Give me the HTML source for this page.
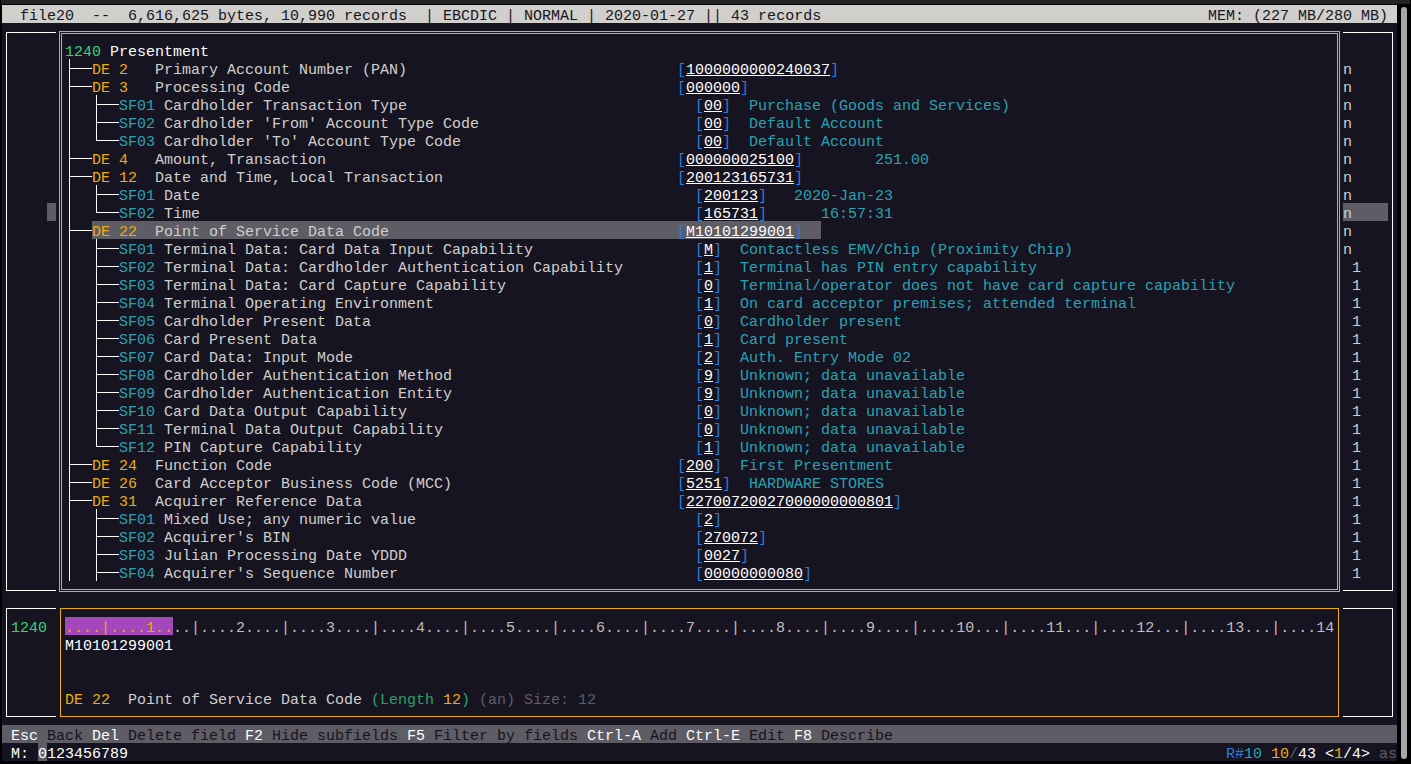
<!DOCTYPE html>
<html><head><meta charset="utf-8"><style>
html,body{margin:0;padding:0;}
body{width:1411px;height:764px;overflow:hidden;position:relative;background:#000;}
#t{position:absolute;left:0;top:0;width:1411px;height:764px;}
#t div{position:absolute;}
#t p{position:absolute;margin:0;white-space:pre;font-family:"Liberation Mono",monospace;font-size:15px;line-height:18px;height:18px;}
#t p.u{text-decoration:underline;text-underline-offset:1px;text-decoration-thickness:1px;}
</style></head><body><div id="t">
<div style="left:1px;top:0;width:1409px;height:4px;background:#232323"></div>
<div style="left:2px;top:5px;width:1395px;height:756px;background:#171421"></div>
<div style="left:1401px;top:7px;width:6px;height:752px;background:#a8a8a8;border-radius:3px"></div>
<div style="left:2px;top:5px;width:1395px;height:18px;background:#d0cfcc;"></div>
<p style="left:2px;top:8px;color:#171421">  file20  --  6,616,625 bytes, 10,990 records  | EBCDIC | NORMAL | 2020-01-27 || 43 records</p>
<p style="left:1208px;top:8px;color:#171421">MEM: (227 MB/280 MB)</p>
<div style="left:6px;top:32px;width:50px;height:1px;background:#ffffff;"></div>
<div style="left:6px;top:590px;width:50px;height:1px;background:#ffffff;"></div>
<div style="left:6px;top:32px;width:1px;height:559px;background:#ffffff;"></div>
<div style="left:1343px;top:32px;width:50px;height:1px;background:#ffffff;"></div>
<div style="left:1343px;top:590px;width:50px;height:1px;background:#ffffff;"></div>
<div style="left:1392px;top:32px;width:1px;height:559px;background:#ffffff;"></div>
<div style="left:59px;top:31px;width:1281px;height:1px;background:#e9ad0c;"></div>
<div style="left:59px;top:591px;width:1281px;height:1px;background:#e9ad0c;"></div>
<div style="left:59px;top:31px;width:1px;height:561px;background:#e9ad0c;"></div>
<div style="left:1339px;top:31px;width:1px;height:561px;background:#e9ad0c;"></div>
<div style="left:61px;top:33px;width:1277px;height:1px;background:#e9ad0c;"></div>
<div style="left:61px;top:589px;width:1277px;height:1px;background:#e9ad0c;"></div>
<div style="left:61px;top:33px;width:1px;height:557px;background:#e9ad0c;"></div>
<div style="left:1337px;top:33px;width:1px;height:557px;background:#e9ad0c;"></div>
<div style="left:47px;top:203px;width:9px;height:18px;background:#5e5c64;"></div>
<div style="left:92px;top:221px;width:729px;height:18px;background:#5e5c64;"></div>
<div style="left:1343px;top:203px;width:45px;height:18px;background:#5e5c64;"></div>
<p style="left:65px;top:44px;color:#33d17a">1240</p>
<p style="left:110px;top:44px;color:#ffffff">Presentment</p>
<div style="left:69px;top:59px;width:1px;height:18px;background:#ffffff;"></div>
<div style="left:69px;top:68px;width:23px;height:1px;background:#ffffff;"></div>
<p style="left:92px;top:62px;color:#e9ad0c">DE 2</p>
<p style="left:155px;top:62px;color:#d0cfcc">Primary Account Number (PAN)</p>
<p style="left:677px;top:62px;color:#2a7bde">[</p>
<p class="u" style="left:686px;top:62px;color:#ffffff">1000000000240037</p>
<p style="left:830px;top:62px;color:#2a7bde">]</p>
<div style="left:69px;top:77px;width:1px;height:18px;background:#ffffff;"></div>
<div style="left:69px;top:86px;width:23px;height:1px;background:#ffffff;"></div>
<p style="left:92px;top:80px;color:#e9ad0c">DE 3</p>
<p style="left:155px;top:80px;color:#d0cfcc">Processing Code</p>
<p style="left:677px;top:80px;color:#2a7bde">[</p>
<p class="u" style="left:686px;top:80px;color:#ffffff">000000</p>
<p style="left:740px;top:80px;color:#2a7bde">]</p>
<div style="left:69px;top:95px;width:1px;height:18px;background:#ffffff;"></div>
<div style="left:96px;top:95px;width:1px;height:18px;background:#ffffff;"></div>
<div style="left:96px;top:104px;width:23px;height:1px;background:#ffffff;"></div>
<p style="left:119px;top:98px;color:#2aa1b3">SF01</p>
<p style="left:164px;top:98px;color:#d0cfcc">Cardholder Transaction Type</p>
<p style="left:695px;top:98px;color:#2a7bde">[</p>
<p class="u" style="left:704px;top:98px;color:#ffffff">00</p>
<p style="left:722px;top:98px;color:#2a7bde">]</p>
<p style="left:749px;top:98px;color:#2aa1b3">Purchase (Goods and Services)</p>
<div style="left:69px;top:113px;width:1px;height:18px;background:#ffffff;"></div>
<div style="left:96px;top:113px;width:1px;height:18px;background:#ffffff;"></div>
<div style="left:96px;top:122px;width:23px;height:1px;background:#ffffff;"></div>
<p style="left:119px;top:116px;color:#2aa1b3">SF02</p>
<p style="left:164px;top:116px;color:#d0cfcc">Cardholder &#x27;From&#x27; Account Type Code</p>
<p style="left:695px;top:116px;color:#2a7bde">[</p>
<p class="u" style="left:704px;top:116px;color:#ffffff">00</p>
<p style="left:722px;top:116px;color:#2a7bde">]</p>
<p style="left:749px;top:116px;color:#2aa1b3">Default Account</p>
<div style="left:69px;top:131px;width:1px;height:18px;background:#ffffff;"></div>
<div style="left:96px;top:131px;width:1px;height:10px;background:#ffffff;"></div>
<div style="left:96px;top:140px;width:23px;height:1px;background:#ffffff;"></div>
<p style="left:119px;top:134px;color:#2aa1b3">SF03</p>
<p style="left:164px;top:134px;color:#d0cfcc">Cardholder &#x27;To&#x27; Account Type Code</p>
<p style="left:695px;top:134px;color:#2a7bde">[</p>
<p class="u" style="left:704px;top:134px;color:#ffffff">00</p>
<p style="left:722px;top:134px;color:#2a7bde">]</p>
<p style="left:749px;top:134px;color:#2aa1b3">Default Account</p>
<div style="left:69px;top:149px;width:1px;height:18px;background:#ffffff;"></div>
<div style="left:69px;top:158px;width:23px;height:1px;background:#ffffff;"></div>
<p style="left:92px;top:152px;color:#e9ad0c">DE 4</p>
<p style="left:155px;top:152px;color:#d0cfcc">Amount, Transaction</p>
<p style="left:677px;top:152px;color:#2a7bde">[</p>
<p class="u" style="left:686px;top:152px;color:#ffffff">000000025100</p>
<p style="left:794px;top:152px;color:#2a7bde">]</p>
<p style="left:875px;top:152px;color:#2aa1b3">251.00</p>
<div style="left:69px;top:167px;width:1px;height:18px;background:#ffffff;"></div>
<div style="left:69px;top:176px;width:23px;height:1px;background:#ffffff;"></div>
<p style="left:92px;top:170px;color:#e9ad0c">DE 12</p>
<p style="left:155px;top:170px;color:#d0cfcc">Date and Time, Local Transaction</p>
<p style="left:677px;top:170px;color:#2a7bde">[</p>
<p class="u" style="left:686px;top:170px;color:#ffffff">200123165731</p>
<p style="left:794px;top:170px;color:#2a7bde">]</p>
<div style="left:69px;top:185px;width:1px;height:18px;background:#ffffff;"></div>
<div style="left:96px;top:185px;width:1px;height:18px;background:#ffffff;"></div>
<div style="left:96px;top:194px;width:23px;height:1px;background:#ffffff;"></div>
<p style="left:119px;top:188px;color:#2aa1b3">SF01</p>
<p style="left:164px;top:188px;color:#d0cfcc">Date</p>
<p style="left:695px;top:188px;color:#2a7bde">[</p>
<p class="u" style="left:704px;top:188px;color:#ffffff">200123</p>
<p style="left:758px;top:188px;color:#2a7bde">]</p>
<p style="left:794px;top:188px;color:#2aa1b3">2020-Jan-23</p>
<div style="left:69px;top:203px;width:1px;height:18px;background:#ffffff;"></div>
<div style="left:96px;top:203px;width:1px;height:10px;background:#ffffff;"></div>
<div style="left:96px;top:212px;width:23px;height:1px;background:#ffffff;"></div>
<p style="left:119px;top:206px;color:#2aa1b3">SF02</p>
<p style="left:164px;top:206px;color:#d0cfcc">Time</p>
<p style="left:695px;top:206px;color:#2a7bde">[</p>
<p class="u" style="left:704px;top:206px;color:#ffffff">165731</p>
<p style="left:758px;top:206px;color:#2a7bde">]</p>
<p style="left:821px;top:206px;color:#2aa1b3">16:57:31</p>
<div style="left:69px;top:221px;width:1px;height:18px;background:#ffffff;"></div>
<div style="left:69px;top:230px;width:23px;height:1px;background:#ffffff;"></div>
<p style="left:92px;top:224px;color:#e9ad0c">DE 22</p>
<p style="left:155px;top:224px;color:#d0cfcc">Point of Service Data Code</p>
<p style="left:677px;top:224px;color:#2a7bde">[</p>
<p class="u" style="left:686px;top:224px;color:#ffffff">M10101299001</p>
<p style="left:794px;top:224px;color:#2a7bde">]</p>
<div style="left:69px;top:239px;width:1px;height:18px;background:#ffffff;"></div>
<div style="left:96px;top:239px;width:1px;height:18px;background:#ffffff;"></div>
<div style="left:96px;top:248px;width:23px;height:1px;background:#ffffff;"></div>
<p style="left:119px;top:242px;color:#2aa1b3">SF01</p>
<p style="left:164px;top:242px;color:#d0cfcc">Terminal Data: Card Data Input Capability</p>
<p style="left:695px;top:242px;color:#2a7bde">[</p>
<p class="u" style="left:704px;top:242px;color:#ffffff">M</p>
<p style="left:713px;top:242px;color:#2a7bde">]</p>
<p style="left:740px;top:242px;color:#2aa1b3">Contactless EMV/Chip (Proximity Chip)</p>
<div style="left:69px;top:257px;width:1px;height:18px;background:#ffffff;"></div>
<div style="left:96px;top:257px;width:1px;height:18px;background:#ffffff;"></div>
<div style="left:96px;top:266px;width:23px;height:1px;background:#ffffff;"></div>
<p style="left:119px;top:260px;color:#2aa1b3">SF02</p>
<p style="left:164px;top:260px;color:#d0cfcc">Terminal Data: Cardholder Authentication Capability</p>
<p style="left:695px;top:260px;color:#2a7bde">[</p>
<p class="u" style="left:704px;top:260px;color:#ffffff">1</p>
<p style="left:713px;top:260px;color:#2a7bde">]</p>
<p style="left:740px;top:260px;color:#2aa1b3">Terminal has PIN entry capability</p>
<div style="left:69px;top:275px;width:1px;height:18px;background:#ffffff;"></div>
<div style="left:96px;top:275px;width:1px;height:18px;background:#ffffff;"></div>
<div style="left:96px;top:284px;width:23px;height:1px;background:#ffffff;"></div>
<p style="left:119px;top:278px;color:#2aa1b3">SF03</p>
<p style="left:164px;top:278px;color:#d0cfcc">Terminal Data: Card Capture Capability</p>
<p style="left:695px;top:278px;color:#2a7bde">[</p>
<p class="u" style="left:704px;top:278px;color:#ffffff">0</p>
<p style="left:713px;top:278px;color:#2a7bde">]</p>
<p style="left:740px;top:278px;color:#2aa1b3">Terminal/operator does not have card capture capability</p>
<div style="left:69px;top:293px;width:1px;height:18px;background:#ffffff;"></div>
<div style="left:96px;top:293px;width:1px;height:18px;background:#ffffff;"></div>
<div style="left:96px;top:302px;width:23px;height:1px;background:#ffffff;"></div>
<p style="left:119px;top:296px;color:#2aa1b3">SF04</p>
<p style="left:164px;top:296px;color:#d0cfcc">Terminal Operating Environment</p>
<p style="left:695px;top:296px;color:#2a7bde">[</p>
<p class="u" style="left:704px;top:296px;color:#ffffff">1</p>
<p style="left:713px;top:296px;color:#2a7bde">]</p>
<p style="left:740px;top:296px;color:#2aa1b3">On card acceptor premises; attended terminal</p>
<div style="left:69px;top:311px;width:1px;height:18px;background:#ffffff;"></div>
<div style="left:96px;top:311px;width:1px;height:18px;background:#ffffff;"></div>
<div style="left:96px;top:320px;width:23px;height:1px;background:#ffffff;"></div>
<p style="left:119px;top:314px;color:#2aa1b3">SF05</p>
<p style="left:164px;top:314px;color:#d0cfcc">Cardholder Present Data</p>
<p style="left:695px;top:314px;color:#2a7bde">[</p>
<p class="u" style="left:704px;top:314px;color:#ffffff">0</p>
<p style="left:713px;top:314px;color:#2a7bde">]</p>
<p style="left:740px;top:314px;color:#2aa1b3">Cardholder present</p>
<div style="left:69px;top:329px;width:1px;height:18px;background:#ffffff;"></div>
<div style="left:96px;top:329px;width:1px;height:18px;background:#ffffff;"></div>
<div style="left:96px;top:338px;width:23px;height:1px;background:#ffffff;"></div>
<p style="left:119px;top:332px;color:#2aa1b3">SF06</p>
<p style="left:164px;top:332px;color:#d0cfcc">Card Present Data</p>
<p style="left:695px;top:332px;color:#2a7bde">[</p>
<p class="u" style="left:704px;top:332px;color:#ffffff">1</p>
<p style="left:713px;top:332px;color:#2a7bde">]</p>
<p style="left:740px;top:332px;color:#2aa1b3">Card present</p>
<div style="left:69px;top:347px;width:1px;height:18px;background:#ffffff;"></div>
<div style="left:96px;top:347px;width:1px;height:18px;background:#ffffff;"></div>
<div style="left:96px;top:356px;width:23px;height:1px;background:#ffffff;"></div>
<p style="left:119px;top:350px;color:#2aa1b3">SF07</p>
<p style="left:164px;top:350px;color:#d0cfcc">Card Data: Input Mode</p>
<p style="left:695px;top:350px;color:#2a7bde">[</p>
<p class="u" style="left:704px;top:350px;color:#ffffff">2</p>
<p style="left:713px;top:350px;color:#2a7bde">]</p>
<p style="left:740px;top:350px;color:#2aa1b3">Auth. Entry Mode 02</p>
<div style="left:69px;top:365px;width:1px;height:18px;background:#ffffff;"></div>
<div style="left:96px;top:365px;width:1px;height:18px;background:#ffffff;"></div>
<div style="left:96px;top:374px;width:23px;height:1px;background:#ffffff;"></div>
<p style="left:119px;top:368px;color:#2aa1b3">SF08</p>
<p style="left:164px;top:368px;color:#d0cfcc">Cardholder Authentication Method</p>
<p style="left:695px;top:368px;color:#2a7bde">[</p>
<p class="u" style="left:704px;top:368px;color:#ffffff">9</p>
<p style="left:713px;top:368px;color:#2a7bde">]</p>
<p style="left:740px;top:368px;color:#2aa1b3">Unknown; data unavailable</p>
<div style="left:69px;top:383px;width:1px;height:18px;background:#ffffff;"></div>
<div style="left:96px;top:383px;width:1px;height:18px;background:#ffffff;"></div>
<div style="left:96px;top:392px;width:23px;height:1px;background:#ffffff;"></div>
<p style="left:119px;top:386px;color:#2aa1b3">SF09</p>
<p style="left:164px;top:386px;color:#d0cfcc">Cardholder Authentication Entity</p>
<p style="left:695px;top:386px;color:#2a7bde">[</p>
<p class="u" style="left:704px;top:386px;color:#ffffff">9</p>
<p style="left:713px;top:386px;color:#2a7bde">]</p>
<p style="left:740px;top:386px;color:#2aa1b3">Unknown; data unavailable</p>
<div style="left:69px;top:401px;width:1px;height:18px;background:#ffffff;"></div>
<div style="left:96px;top:401px;width:1px;height:18px;background:#ffffff;"></div>
<div style="left:96px;top:410px;width:23px;height:1px;background:#ffffff;"></div>
<p style="left:119px;top:404px;color:#2aa1b3">SF10</p>
<p style="left:164px;top:404px;color:#d0cfcc">Card Data Output Capability</p>
<p style="left:695px;top:404px;color:#2a7bde">[</p>
<p class="u" style="left:704px;top:404px;color:#ffffff">0</p>
<p style="left:713px;top:404px;color:#2a7bde">]</p>
<p style="left:740px;top:404px;color:#2aa1b3">Unknown; data unavailable</p>
<div style="left:69px;top:419px;width:1px;height:18px;background:#ffffff;"></div>
<div style="left:96px;top:419px;width:1px;height:18px;background:#ffffff;"></div>
<div style="left:96px;top:428px;width:23px;height:1px;background:#ffffff;"></div>
<p style="left:119px;top:422px;color:#2aa1b3">SF11</p>
<p style="left:164px;top:422px;color:#d0cfcc">Terminal Data Output Capability</p>
<p style="left:695px;top:422px;color:#2a7bde">[</p>
<p class="u" style="left:704px;top:422px;color:#ffffff">0</p>
<p style="left:713px;top:422px;color:#2a7bde">]</p>
<p style="left:740px;top:422px;color:#2aa1b3">Unknown; data unavailable</p>
<div style="left:69px;top:437px;width:1px;height:18px;background:#ffffff;"></div>
<div style="left:96px;top:437px;width:1px;height:10px;background:#ffffff;"></div>
<div style="left:96px;top:446px;width:23px;height:1px;background:#ffffff;"></div>
<p style="left:119px;top:440px;color:#2aa1b3">SF12</p>
<p style="left:164px;top:440px;color:#d0cfcc">PIN Capture Capability</p>
<p style="left:695px;top:440px;color:#2a7bde">[</p>
<p class="u" style="left:704px;top:440px;color:#ffffff">1</p>
<p style="left:713px;top:440px;color:#2a7bde">]</p>
<p style="left:740px;top:440px;color:#2aa1b3">Unknown; data unavailable</p>
<div style="left:69px;top:455px;width:1px;height:18px;background:#ffffff;"></div>
<div style="left:69px;top:464px;width:23px;height:1px;background:#ffffff;"></div>
<p style="left:92px;top:458px;color:#e9ad0c">DE 24</p>
<p style="left:155px;top:458px;color:#d0cfcc">Function Code</p>
<p style="left:677px;top:458px;color:#2a7bde">[</p>
<p class="u" style="left:686px;top:458px;color:#ffffff">200</p>
<p style="left:713px;top:458px;color:#2a7bde">]</p>
<p style="left:740px;top:458px;color:#2aa1b3">First Presentment</p>
<div style="left:69px;top:473px;width:1px;height:18px;background:#ffffff;"></div>
<div style="left:69px;top:482px;width:23px;height:1px;background:#ffffff;"></div>
<p style="left:92px;top:476px;color:#e9ad0c">DE 26</p>
<p style="left:155px;top:476px;color:#d0cfcc">Card Acceptor Business Code (MCC)</p>
<p style="left:677px;top:476px;color:#2a7bde">[</p>
<p class="u" style="left:686px;top:476px;color:#ffffff">5251</p>
<p style="left:722px;top:476px;color:#2a7bde">]</p>
<p style="left:749px;top:476px;color:#2aa1b3">HARDWARE STORES</p>
<div style="left:69px;top:491px;width:1px;height:18px;background:#ffffff;"></div>
<div style="left:69px;top:500px;width:23px;height:1px;background:#ffffff;"></div>
<p style="left:92px;top:494px;color:#e9ad0c">DE 31</p>
<p style="left:155px;top:494px;color:#d0cfcc">Acquirer Reference Data</p>
<p style="left:677px;top:494px;color:#2a7bde">[</p>
<p class="u" style="left:686px;top:494px;color:#ffffff">22700720027000000000801</p>
<p style="left:893px;top:494px;color:#2a7bde">]</p>
<div style="left:69px;top:509px;width:1px;height:18px;background:#ffffff;"></div>
<div style="left:96px;top:509px;width:1px;height:18px;background:#ffffff;"></div>
<div style="left:96px;top:518px;width:23px;height:1px;background:#ffffff;"></div>
<p style="left:119px;top:512px;color:#2aa1b3">SF01</p>
<p style="left:164px;top:512px;color:#d0cfcc">Mixed Use; any numeric value</p>
<p style="left:695px;top:512px;color:#2a7bde">[</p>
<p class="u" style="left:704px;top:512px;color:#ffffff">2</p>
<p style="left:713px;top:512px;color:#2a7bde">]</p>
<div style="left:69px;top:527px;width:1px;height:18px;background:#ffffff;"></div>
<div style="left:96px;top:527px;width:1px;height:18px;background:#ffffff;"></div>
<div style="left:96px;top:536px;width:23px;height:1px;background:#ffffff;"></div>
<p style="left:119px;top:530px;color:#2aa1b3">SF02</p>
<p style="left:164px;top:530px;color:#d0cfcc">Acquirer&#x27;s BIN</p>
<p style="left:695px;top:530px;color:#2a7bde">[</p>
<p class="u" style="left:704px;top:530px;color:#ffffff">270072</p>
<p style="left:758px;top:530px;color:#2a7bde">]</p>
<div style="left:69px;top:545px;width:1px;height:18px;background:#ffffff;"></div>
<div style="left:96px;top:545px;width:1px;height:18px;background:#ffffff;"></div>
<div style="left:96px;top:554px;width:23px;height:1px;background:#ffffff;"></div>
<p style="left:119px;top:548px;color:#2aa1b3">SF03</p>
<p style="left:164px;top:548px;color:#d0cfcc">Julian Processing Date YDDD</p>
<p style="left:695px;top:548px;color:#2a7bde">[</p>
<p class="u" style="left:704px;top:548px;color:#ffffff">0027</p>
<p style="left:740px;top:548px;color:#2a7bde">]</p>
<div style="left:69px;top:563px;width:1px;height:18px;background:#ffffff;"></div>
<div style="left:96px;top:563px;width:1px;height:18px;background:#ffffff;"></div>
<div style="left:96px;top:572px;width:23px;height:1px;background:#ffffff;"></div>
<p style="left:119px;top:566px;color:#2aa1b3">SF04</p>
<p style="left:164px;top:566px;color:#d0cfcc">Acquirer&#x27;s Sequence Number</p>
<p style="left:695px;top:566px;color:#2a7bde">[</p>
<p class="u" style="left:704px;top:566px;color:#ffffff">00000000080</p>
<p style="left:803px;top:566px;color:#2a7bde">]</p>
<p style="left:1343px;top:62px;color:#d0cfcc">n</p>
<p style="left:1343px;top:80px;color:#d0cfcc">n</p>
<p style="left:1343px;top:98px;color:#d0cfcc">n</p>
<p style="left:1343px;top:116px;color:#d0cfcc">n</p>
<p style="left:1343px;top:134px;color:#d0cfcc">n</p>
<p style="left:1343px;top:152px;color:#d0cfcc">n</p>
<p style="left:1343px;top:170px;color:#d0cfcc">n</p>
<p style="left:1343px;top:188px;color:#d0cfcc">n</p>
<p style="left:1343px;top:206px;color:#d0cfcc">n</p>
<p style="left:1343px;top:224px;color:#d0cfcc">n</p>
<p style="left:1343px;top:242px;color:#d0cfcc">n</p>
<p style="left:1352px;top:260px;color:#d0cfcc">1</p>
<p style="left:1352px;top:278px;color:#d0cfcc">1</p>
<p style="left:1352px;top:296px;color:#d0cfcc">1</p>
<p style="left:1352px;top:314px;color:#d0cfcc">1</p>
<p style="left:1352px;top:332px;color:#d0cfcc">1</p>
<p style="left:1352px;top:350px;color:#d0cfcc">1</p>
<p style="left:1352px;top:368px;color:#d0cfcc">1</p>
<p style="left:1352px;top:386px;color:#d0cfcc">1</p>
<p style="left:1352px;top:404px;color:#d0cfcc">1</p>
<p style="left:1352px;top:422px;color:#d0cfcc">1</p>
<p style="left:1352px;top:440px;color:#d0cfcc">1</p>
<p style="left:1352px;top:458px;color:#d0cfcc">1</p>
<p style="left:1352px;top:476px;color:#d0cfcc">1</p>
<p style="left:1352px;top:494px;color:#d0cfcc">1</p>
<p style="left:1352px;top:512px;color:#d0cfcc">1</p>
<p style="left:1352px;top:530px;color:#d0cfcc">1</p>
<p style="left:1352px;top:548px;color:#d0cfcc">1</p>
<p style="left:1352px;top:566px;color:#d0cfcc">1</p>
<div style="left:6px;top:608px;width:50px;height:1px;background:#ffffff;"></div>
<div style="left:6px;top:716px;width:50px;height:1px;background:#ffffff;"></div>
<div style="left:6px;top:608px;width:1px;height:109px;background:#ffffff;"></div>
<div style="left:1343px;top:608px;width:50px;height:1px;background:#ffffff;"></div>
<div style="left:1343px;top:716px;width:50px;height:1px;background:#ffffff;"></div>
<div style="left:1392px;top:608px;width:1px;height:109px;background:#ffffff;"></div>
<div style="left:60px;top:608px;width:1279px;height:1px;background:#e9ad0c;"></div>
<div style="left:60px;top:716px;width:1279px;height:1px;background:#e9ad0c;"></div>
<div style="left:60px;top:608px;width:1px;height:109px;background:#e9ad0c;"></div>
<div style="left:1338px;top:608px;width:1px;height:109px;background:#e9ad0c;"></div>
<p style="left:11px;top:620px;color:#33d17a">1240</p>
<div style="left:65px;top:617px;width:108px;height:18px;background:#a347ba;"></div>
<p style="left:65px;top:620px;color:#e9ad0c">....|....1..</p>
<p style="left:173px;top:620px;color:#c0bfbc">..|....2....|....3....|....4....|....5....|....6....|....7....|....8....|....9....|....10...|....11...|....12...|....13...|....14</p>
<p style="left:65px;top:638px;color:#ffffff">M10101299001</p>
<p style="left:65px;top:692px;color:#e9ad0c">DE 22</p>
<p style="left:128px;top:692px;color:#d0cfcc">Point of Service Data Code</p>
<p style="left:371px;top:692px;color:#26a269">(Length </p>
<p style="left:443px;top:692px;color:#e9ad0c">12</p>
<p style="left:461px;top:692px;color:#26a269">)</p>
<p style="left:479px;top:692px;color:#5e5c64">(an) Size: 12</p>
<div style="left:2px;top:725px;width:1395px;height:18px;background:#5e5c64;"></div>
<p style="left:11px;top:728px;color:#ffffff">Esc</p>
<p style="left:47px;top:728px;color:#171421">Back</p>
<p style="left:92px;top:728px;color:#ffffff">Del</p>
<p style="left:128px;top:728px;color:#171421">Delete field</p>
<p style="left:245px;top:728px;color:#ffffff">F2</p>
<p style="left:272px;top:728px;color:#171421">Hide subfields</p>
<p style="left:407px;top:728px;color:#ffffff">F5</p>
<p style="left:434px;top:728px;color:#171421">Filter by fields</p>
<p style="left:587px;top:728px;color:#ffffff">Ctrl-A</p>
<p style="left:650px;top:728px;color:#171421">Add</p>
<p style="left:686px;top:728px;color:#ffffff">Ctrl-E</p>
<p style="left:749px;top:728px;color:#171421">Edit</p>
<p style="left:794px;top:728px;color:#ffffff">F8</p>
<p style="left:821px;top:728px;color:#171421">Describe</p>
<div style="left:38px;top:743px;width:9px;height:18px;background:#5e5c64;"></div>
<p style="left:11px;top:746px;color:#ffffff">M: 0123456789</p>
<p style="left:1226px;top:746px;color:#2a7bde">R#</p>
<p style="left:1244px;top:746px;color:#2aa1b3">10</p>
<p style="left:1271px;top:746px;color:#e9ad0c">10</p>
<p style="left:1289px;top:746px;color:#5e5c64">/</p>
<p style="left:1298px;top:746px;color:#ffffff">43</p>
<p style="left:1325px;top:746px;color:#ffffff">&lt;</p>
<p style="left:1334px;top:746px;color:#e9ad0c">1</p>
<p style="left:1343px;top:746px;color:#ffffff">/</p>
<p style="left:1352px;top:746px;color:#ffffff">4&gt;</p>
<p style="left:1379px;top:746px;color:#5e5c64">as</p>
</div></body></html>
